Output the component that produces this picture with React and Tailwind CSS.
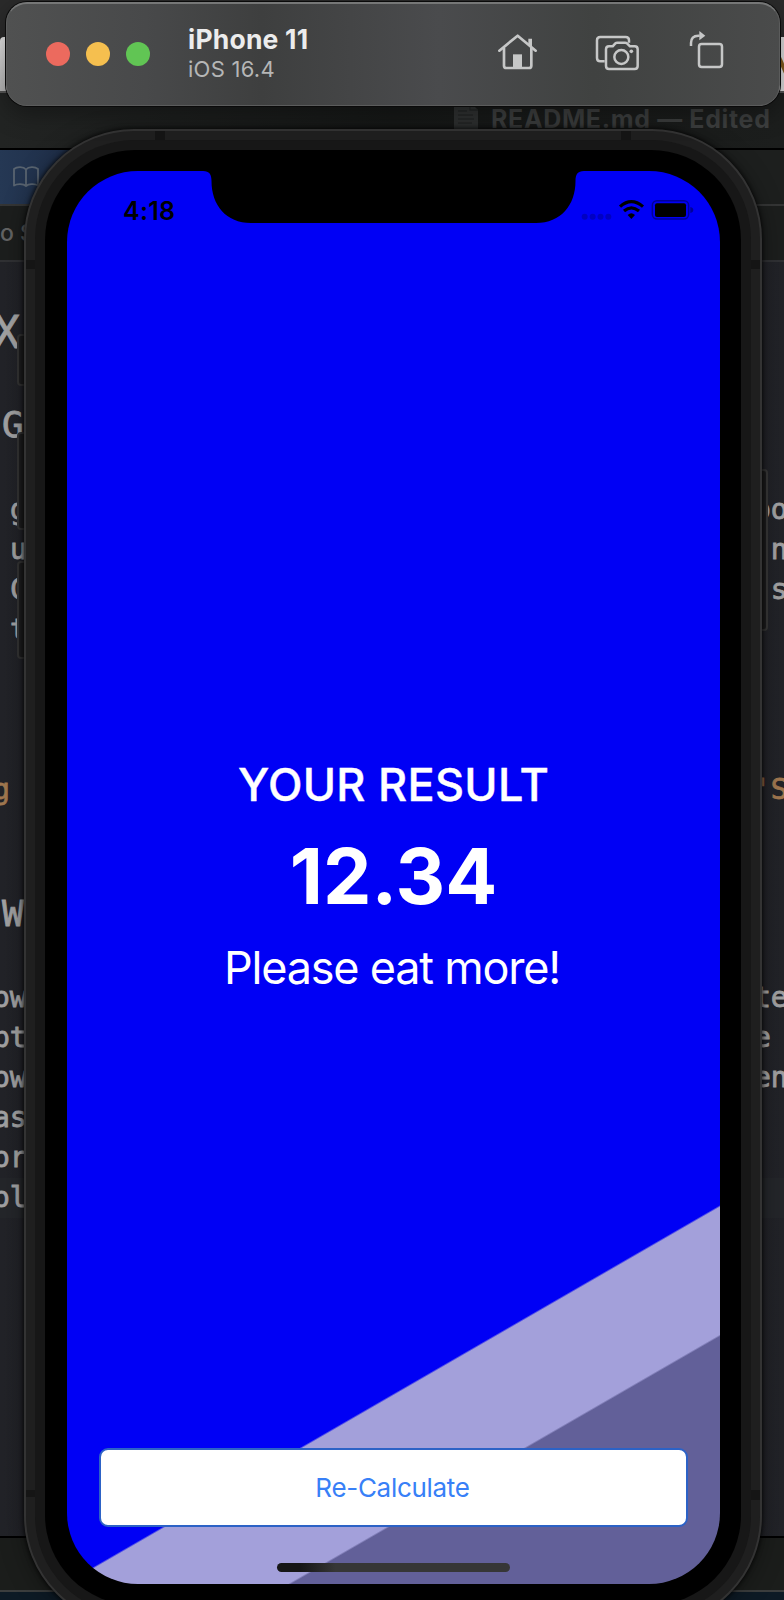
const MONO = "font-['DejaVu_Sans_Mono',monospace] whitespace-pre [-webkit-text-stroke:0.8px_currentColor]";

function CodeRow({ left = "", right = "", className = "", leftClass = "", orange = false, active = false }) {
  return (
    <div
      className={`flex h-10 shrink-0 justify-between overflow-hidden text-[28px] leading-10 ${MONO} ${
        orange ? "text-[#a17850]" : "text-[#a2a2a3]"
      } ${active ? "bg-[#24262a]" : ""} ${className}`}
    >
      <span className={leftClass}>{left}</span>
      <span className="w-[30px]">{right}</span>
    </div>
  );
}

function Heading({ children, className }) {
  return <div className={`shrink-0 text-[#a2a2a3] ${MONO} ${className}`}>{children}</div>;
}

function BookIcon() {
  return (
    <svg className="h-6 w-7" viewBox="0 0 28 24" fill="none" stroke="#596470" strokeWidth="1.8" strokeLinejoin="round">
      <path d="M14 4.5C11.500 1.500 5 1.500 2 4V20.500C5 18.500 11.500 18.500 14 21C16.500 18.500 23 18.500 26 20.500V4C23 1.500 16.500 1.500 14 4.500V21" />
    </svg>
  );
}

function DocIcon() {
  return (
    <svg className="h-7 w-6" viewBox="0 0 24 28">
      <path d="M0 0H16L24 8V28H0Z" fill="#303232" />
      <path d="M16 0V8H24M4 9H13M4 13H19M4 17H20M4 21H18" fill="none" stroke="#252727" strokeWidth="1.3" />
    </svg>
  );
}

function EditorWindow() {
  return (
    <div className="flex h-full w-full flex-col bg-[#1f2025]">
      <div className="h-[37px] shrink-0 bg-[#2a2a2a]" />
      <div className="flex h-[54px] shrink-0 justify-between bg-[#222]">
        <div className="w-5 rounded-tl-sm bg-gradient-to-b from-[#e4e4e4] to-[#b5b5b5]" />
        <svg className="h-[54px] w-5" viewBox="0 0 20 54">
          <rect width="20" height="54" fill="#dadada" />
          <path d="M14 18L22 36" stroke="#81591d" strokeWidth="4" />
        </svg>
      </div>
      <div className="h-[2px] shrink-0 bg-[#555]" />
      <div className="flex h-[55px] shrink-0 items-start justify-end bg-gradient-to-r from-[#222423] via-[#171918] to-[#1c1e1d] pr-[14px]">
        <div className="mt-[9px] flex gap-[13px]">
          <DocIcon />
          <span className="w-[279px] whitespace-nowrap font-['Inter',sans-serif] text-[25px] font-bold leading-[34px] tracking-[0.65px] text-[#3d3f3f]">
            README.md — Edited
          </span>
        </div>
      </div>
      <div className="h-[2px] shrink-0 bg-black" />
      <div className="flex h-[54px] shrink-0 items-center justify-between bg-[#1d1f1e]">
        <div className="flex h-full w-[120px] items-center bg-gradient-to-r from-[#253854] to-[#1a2740] pl-[12px]">
          <BookIcon />
        </div>
      </div>
      <div className="h-[2px] shrink-0 bg-[#343535]" />
      <div className="flex h-[54px] shrink-0 items-center bg-[#1c1e1d] font-['Inter',sans-serif] text-[23px] font-medium text-[#636464]">
        o S
      </div>
      <div className="h-[2px] shrink-0 bg-[#303134]" />

      <div className="flex h-[1274px] shrink-0 flex-col bg-gradient-to-r from-[#222328] via-[#15161a] to-[#222328]">
        <Heading className="mt-[40px] -ml-[7px] h-[60px] text-[45px] leading-[62px]">X</Heading>
        <Heading className="mt-[38px] ml-[2px] h-[50px] text-[36px] leading-[50px]">G</Heading>
        <CodeRow className="mt-[40px]" left="g" right="oo" leftClass="ml-[10px]" />
        <CodeRow left="u" right=" n" leftClass="ml-[10px]" />
        <CodeRow left="C" right=" s" leftClass="ml-[10px]" />
        <CodeRow left="t" leftClass="ml-[10px]" />
        <CodeRow className="mt-[120px]" left="g" right="'S" leftClass="-ml-[7px]" orange />
        <Heading className="mt-[79px] ml-[2px] h-[50px] text-[36px] leading-[50px]">W</Heading>
        <CodeRow className="mt-[39px]" left="ow" right="te" leftClass="-ml-[7px]" />
        <CodeRow left="pt" right="e" leftClass="-ml-[7px]" />
        <CodeRow left="ow" right="en" leftClass="-ml-[7px]" />
        <CodeRow left="as" leftClass="-ml-[7px]" />
        <CodeRow left="or" leftClass="-ml-[7px]" />
        <CodeRow left="ol" leftClass="-ml-[7px]" active />
      </div>

      <div className="h-[2px] shrink-0 bg-black" />
      <div className="h-[52px] shrink-0 bg-[#1b1d1b]" />
      <div className="h-[2px] shrink-0 bg-[#3c3e3e]" />
      <div className="flex-1 bg-[#0d1a25]" />
    </div>
  );
}

function StatusIcons() {
  return (
    <svg className="h-6 w-[115px]" viewBox="60 114 345 72">
      <g fill="#0000c2">
        <circle cx="74" cy="170" r="9" />
        <circle cx="98" cy="170" r="9" />
        <circle cx="121.500" cy="170" r="9" />
        <circle cx="145" cy="170" r="9" />
      </g>
      <g fill="none" stroke="#000" strokeWidth="9.500">
        <path d="M180 140Q214 110 249 140" />
        <path d="M192 153Q214 134 237 153" />
      </g>
      <path d="M203 165Q214 155 225 165L214 177Z" />
      <rect x="277" y="122" width="109" height="55" rx="14" fill="none" stroke="#000098" strokeWidth="4.500" />
      <rect x="285" y="130" width="93" height="41" rx="6" />
      <path d="M391 141Q400 143 400 150Q400 157 391 159Z" fill="#000098" />
    </svg>
  );
}

function Notch() {
  return (
    <svg className="h-[52px] w-[381px]" viewBox="0 0 381 52">
      <path d="M0 0C6.500 0 8.500 3.500 8.500 10C8.500 34 23 52 48 52H333C358 52 372.500 34 372.500 10C372.500 3.500 374.500 0 381 0Z" />
    </svg>
  );
}

function PhoneScreen() {
  return (
    <div className="relative flex h-[1413px] w-[653px] flex-col overflow-hidden rounded-[71px] bg-[linear-gradient(150deg,#0000f5_78.820%,#a3a0da_78.940%,#a3a0da_86.050%,#626099_86.170%)] font-['Inter',sans-serif]">
      <div className="absolute left-[136px] top-0">
        <Notch />
      </div>
      <div className="flex h-[78px] shrink-0 items-center justify-between pl-[56px] pr-[25px]">
        <span className="pt-px text-[25px] font-semibold leading-6 tracking-[0.3px] text-black">4:18</span>
        <StatusIcons />
      </div>
      <div className="flex flex-1 flex-col items-center pt-[508px] text-white">
        <div className="h-[56px] whitespace-nowrap text-[45px] font-medium leading-[56px] tracking-[0.3px] [-webkit-text-stroke:0.4px_#fff]">YOUR RESULT</div>
        <div className="mt-[16px] h-[94px] whitespace-nowrap text-[77px] font-bold leading-[94px]">12.34</div>
        <div className="mt-[17px] h-[56px] whitespace-nowrap pr-[3px] text-[45px] leading-[56px] tracking-[-1.2px]">Please eat more!</div>
      </div>
      <div className="flex h-[136px] shrink-0 flex-col items-center">
        <button className="h-[79px] w-[589px] rounded-[9px] border-2 border-[#2c62c6] bg-white pr-[2px] text-[26px] text-[#3880f7] tracking-[-0.3px]">
          Re-Calculate
        </button>
        <div className="mt-[36px] h-[9px] w-[233px] rounded-full bg-gradient-to-r from-[#161616] from-10% to-[#363636] to-25%" />
      </div>
    </div>
  );
}

function Phone() {
  return (
    <div className="relative h-[1497px] w-[738px]">
      <div className="absolute -left-[7px] top-[205px] h-[52px] w-3 rounded-[4px] border-2 border-[#333] bg-[#1d1d1e]" />
      <div className="absolute -left-[7px] top-[303px] h-[98px] w-3 rounded-[4px] border-2 border-[#333] bg-[#1d1d1e]" />
      <div className="absolute -left-[7px] top-[432px] h-[98px] w-3 rounded-[4px] border-2 border-[#333] bg-[#1d1d1e]" />
      <div className="absolute -right-[6px] top-[340px] h-[162px] w-3 rounded-[4px] border-2 border-[#383838] bg-[#1d1d1e]" />
      <div className="relative h-full w-full rounded-[110px] border-2 border-[#333] bg-[#1f1f1f] p-[9px] shadow-[0_0_4px_1px_rgba(0,0,0,0.7),0_4px_24px_2px_rgba(0,0,0,0.3)]">
        <div className="h-full w-full rounded-[99px] bg-[#171717] p-[10px]">
          <div className="h-full w-full rounded-[90px] bg-black px-[22px] pt-[21px]">
            <PhoneScreen />
          </div>
        </div>
        <div className="absolute left-[129px] top-0 h-[9px] w-[10px] bg-[#151515]" />
        <div className="absolute right-[129px] top-0 h-[9px] w-[10px] bg-[#151515]" />
        <div className="absolute left-0 top-[129px] h-[9px] w-[9px] bg-[#151515]" />
        <div className="absolute right-0 top-[129px] h-[9px] w-[9px] bg-[#151515]" />
        <div className="absolute left-0 top-[1359px] h-[7px] w-[9px] bg-[#151515]" />
        <div className="absolute right-0 top-[1359px] h-[10px] w-[9px] bg-[#151515]" />
      </div>
    </div>
  );
}

function HomeIcon() {
  return (
    <svg className="h-10 w-11" viewBox="312 102 132 120" fill="none" stroke="#c6c7c7" strokeWidth="8" strokeLinecap="round" strokeLinejoin="round">
      <path d="M322 152L377 107L431 152" />
      <path d="M336 145V197Q336 204 343 204H411Q418 204 418 197V145" />
      <path d="M409 116H420V144L409 134Z" fill="#c6c7c7" stroke="none" />
      <path d="M363 204V163H390V204Z" fill="#c6c7c7" stroke="none" />
    </svg>
  );
}

function CameraIcon() {
  return (
    <svg className="h-10 w-12" viewBox="606 102 144 120" fill="none" stroke="#c6c7c7" strokeWidth="7.500" strokeLinejoin="round">
      <path d="M638 184H625Q615 184 615 174V121Q615 111 625 111H701Q711 111 711 121V128" />
      <path d="M651 139H662L670 130Q672 128 676 128H699Q703 128 705 130L714 139H728Q737 139 737 148V198Q737 207 728 207H651Q642 207 642 198V148Q642 139 651 139Z" />
      <circle cx="688" cy="171" r="21" />
      <circle cx="718" cy="154" r="5.500" fill="#c6c7c7" stroke="none" />
    </svg>
  );
}

function RotateIcon() {
  return (
    <svg className="h-12 w-[38px]" viewBox="888 90 114 144" fill="none" stroke="#c6c7c7" strokeWidth="7.500" strokeLinejoin="round">
      <rect x="921" y="132" width="69" height="69" rx="8" />
      <path d="M897 138V129Q897 107 919 107H923" />
      <path d="M922 93L940 107L922 121Z" fill="#c6c7c7" stroke="none" />
    </svg>
  );
}

function SimulatorBar() {
  return (
    <div className="flex h-[104px] w-[774px] items-center rounded-[21px] border border-t-2 border-[#5b5c5c] border-t-[#767777] bg-[linear-gradient(90deg,#505151_0%,#48494a_18%,#3e3f3f_33%,#4a4b4d_56%,#404241_76%,#4a4b4b_100%)] pb-[2px] pl-[39px] font-['Inter',sans-serif] shadow-[0_0_0_1px_#0a0a0a,0_8px_24px_rgba(0,0,0,0.35)]">
      <div className="flex gap-4">
        <div className="h-6 w-6 rounded-full bg-[#ec6a5e]" />
        <div className="h-6 w-6 rounded-full bg-[#f5bf4f]" />
        <div className="h-6 w-6 rounded-full bg-[#61c554]" />
      </div>
      <div className="ml-[38px] flex w-[308px] flex-col">
        <span className="text-[26.500px] font-bold leading-[30px] tracking-[0.2px] text-[#ececec]">iPhone 11</span>
        <span className="pt-px text-[22px] leading-[28px] tracking-[0.25px] text-[#b5b6b6]">iOS 16.4</span>
      </div>
      <HomeIcon />
      <div className="ml-[54px]">
        <CameraIcon />
      </div>
      <div className="ml-[46px]">
        <RotateIcon />
      </div>
    </div>
  );
}

export default function App() {
  return (
    <div className="relative h-[1600px] w-[784px] overflow-hidden bg-[#1f2025]">
      <EditorWindow />
      <div className="absolute left-[24px] top-[129px]">
        <Phone />
      </div>
      <div className="absolute left-[6px] top-[2px]">
        <SimulatorBar />
      </div>
    </div>
  );
}
